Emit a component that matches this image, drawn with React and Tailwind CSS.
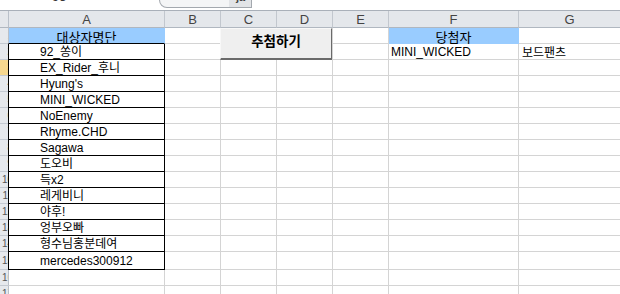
import React from "react";

const names = [
  "92_쏭이",
  "EX_Rider_후니",
  "Hyung's",
  "MINI_WICKED",
  "NoEnemy",
  "Rhyme.CHD",
  "Sagawa",
  "도오비",
  "득x2",
  "레게비니",
  "야후!",
  "엉부오빠",
  "형수님홍분데여",
  "mercedes300912",
];

const cols = ["A", "B", "C", "D", "E", "F", "G"];

function RowHeader({ n, active, h }) {
  return (
    <div
      className={
        "overflow-hidden border-b border-[#c4cad2] flex items-center justify-end " +
        (active ? "bg-[#f7d88f]" : "bg-[#e6e9ed]") +
        " " +
        h
      }
    >
      <span className="mr-[-5px] text-[10px] leading-none text-[#555]">{n}</span>
    </div>
  );
}

export default function App() {
  const rows = [];
  for (let r = 1; r <= 17; r++) {
    const h = r === 15 ? "h-[18px]" : "h-[16px]";
    const inList = r >= 2 && r <= 15;
    const cells = [];
    cells.push(<RowHeader key="rh" n={r} active={r === 3} h={h} />);
    // Column A
    let aCls = "box-border border-l flex items-center " + h + " ";
    if (r === 1) {
      aCls += "bg-[#99ccff] border-l-[#b9c0c9] border-r border-r-[#99ccff] border-b border-b-black justify-center";
    } else if (inList) {
      aCls += "border-l-black border-r border-r-black border-b border-b-black pl-[31px]";
    } else {
      aCls += "border-l-[#b9c0c9] border-r border-r-[#d4d4d4] border-b border-b-[#d4d4d4]";
    }
    cells.push(
      <div key="A" className={aCls}>
        {r === 1 ? (
          <span className="text-[13px] leading-none font-['Noto_Sans_CJK_KR',sans-serif] text-black pt-[1px]">
            대상자명단
          </span>
        ) : inList ? (
          <span className="text-[12px] leading-none whitespace-nowrap text-black">
            {names[r - 2]}
          </span>
        ) : null}
      </div>
    );
    // B..E
    ["B", "C", "D", "E"].forEach((c) => {
      cells.push(
        <div
          key={c}
          className={"box-border border-r border-b border-[#d4d4d4] " + h}
        />
      );
    });
    // F
    let fContent = null;
    let fCls = "box-border border-r border-b flex items-center " + h + " ";
    if (r === 1) {
      fCls += "bg-[#99ccff] border-[#99ccff] justify-center";
      fContent = (
        <span className="text-[13px] leading-none font-['Noto_Sans_CJK_KR',sans-serif] pt-[1px]">
          당첨자
        </span>
      );
    } else {
      fCls += "border-[#d4d4d4] pl-[2px]";
      if (r === 2)
        fContent = (
          <span className="text-[12px] leading-none">MINI_WICKED</span>
        );
    }
    cells.push(
      <div key="F" className={fCls}>
        {fContent}
      </div>
    );
    // G
    cells.push(
      <div
        key="G"
        className={
          "box-border border-b border-[#d4d4d4] flex items-center pl-[3px] " + h
        }
      >
        {r === 2 ? (
          <span className="text-[12px] leading-none font-['Noto_Sans_CJK_KR',sans-serif]">
            보드팬츠
          </span>
        ) : null}
      </div>
    );
    rows.push(...cells);
  }

  return (
    <div className="w-[620px] h-[294px] overflow-hidden bg-white font-['Liberation_Sans','Noto_Sans_CJK_KR',sans-serif] text-black">
      {/* formula bar remnant */}
      <div className="h-[11px] border-b border-[#a9b0b9] bg-white flex items-start overflow-hidden">
        <span className="ml-[52px] mt-[-10px] text-[13px] leading-none text-[#333]">95</span>
        <div className="ml-[93px] w-[93px] h-[8px] box-border border border-t-0 border-[#a3a8ae] rounded-bl-[14px] bg-[#f4f5f6] flex justify-end overflow-hidden">
          <div className="w-[22px] h-full bg-[#e2e4e7] flex items-start justify-center overflow-hidden">
            <span className="mt-[-8px] text-[11px] leading-none font-bold text-[#444]">ja</span>
          </div>
        </div>
      </div>
      <div className="relative">
        <div className="grid grid-cols-[8px_157px_56px_56px_56px_56px_130px_1fr]">
          {/* column headers */}
          <div className="h-[17px] box-border bg-[#e4e7eb] border-b border-[#b0b7c0]" />
          {cols.map((c, i) => (
            <div
              key={c}
              className={
                "h-[17px] box-border bg-[#e4e7eb] border-b border-[#b0b7c0] flex items-center justify-center text-[13px] leading-none text-[#444] " +
                (i === 0 ? "border-l border-l-[#b9c0c9] " : "") +
                (i < 6 ? "border-r border-r-[#c2c7ce]" : "")
              }
            >
              {c}
            </div>
          ))}
          {rows}
        </div>
        {/* form button over C1:D2 */}
        <div className="absolute left-[220px] top-[17px] w-[112px] h-[32px] box-border bg-[#efefef] border-t border-l border-t-[#f8f8f8] border-l-[#f8f8f8] border-r border-b-[2px] border-r-[#6a6a6a] border-b-[#6a6a6a] flex justify-center pt-[5px]">
          <span className="text-[13.5px] leading-none font-bold font-['Noto_Sans_CJK_KR',sans-serif] text-black">
            추첨하기
          </span>
        </div>
      </div>
    </div>
  );
}
